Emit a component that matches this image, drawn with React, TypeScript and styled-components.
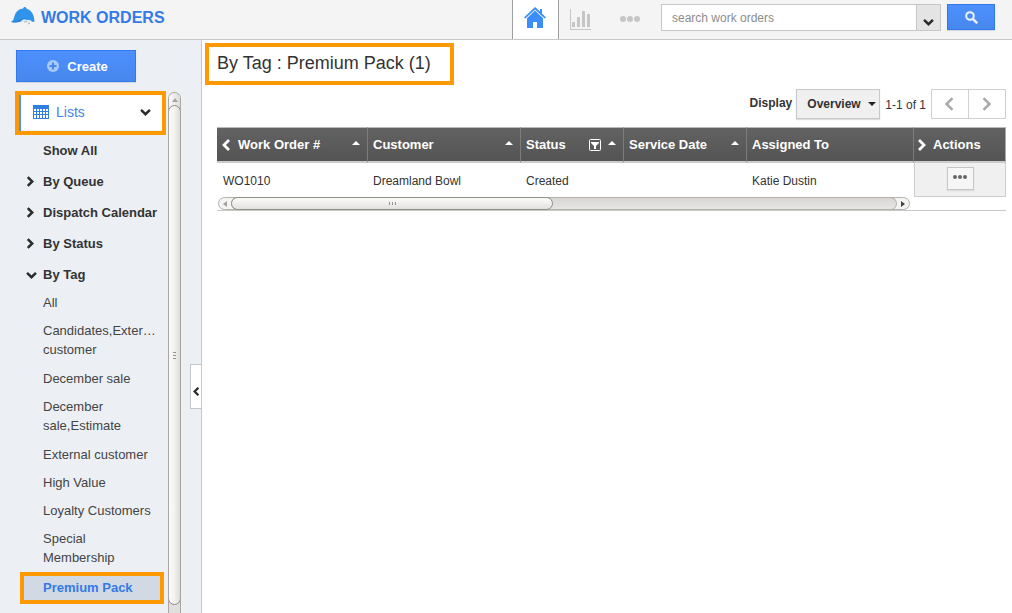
import React from "react";
import styled, { createGlobalStyle, css } from "styled-components";

const GlobalStyle = createGlobalStyle`
  * { box-sizing: border-box; }
  body {
    margin: 0;
    background: #fff;
    color: #333;
    font-family: "Liberation Sans", Arial, sans-serif;
    font-size: 12px;
  }
  button, input, select { font-family: inherit; margin: 0; }
  button { cursor: pointer; }
  ul { list-style: none; margin: 0; padding: 0; }
`;

const ORANGE = "#ff9900";

const Page = styled.div`
  display: flex;
  flex-direction: column;
  height: 100vh;
  overflow: hidden;
`;

/* ---------- top bar ---------- */

const TopBar = styled.header`
  display: flex;
  flex: none;
  height: 40px;
  background: #f4f4f4;
  border-bottom: 1px solid #c8c8c8;
`;

const Brand = styled.div`
  display: flex;
  align-items: flex-start;
  flex: 1;
  gap: 6px;
  padding: 7px 0 0 11px;
  color: #347ae6;
  font-size: 16px;
  font-weight: bold;
  line-height: 22px;
`;

const NavTabs = styled.nav`
  display: flex;
`;

const NavTab = styled.a<{ $active?: boolean; $width: number }>`
  display: flex;
  justify-content: center;
  width: ${(p) => p.$width}px;
  height: 39px;
  ${(p) =>
    p.$active &&
    css`
      padding-right: 1px;
      background: #fff;
      border-left: 1px solid #a0a0a0;
      border-right: 1px solid #a0a0a0;
    `}
`;

const NavIcon = styled.span<{ $top: number }>`
  display: flex;
  align-self: flex-start;
  padding-top: ${(p) => p.$top}px;
`;

const SearchForm = styled.form`
  display: flex;
  padding: 4px 17px 0 3px;
`;

const SearchBox = styled.input`
  width: 255px;
  height: 27px;
  padding: 0 10px;
  border: 1px solid #c6c6c6;
  border-right: 0;
  border-radius: 0;
  background: #fff;
  font-size: 12px;
  outline: none;
  &::placeholder { color: #8c8c8c; opacity: 1; }
`;

const SearchMenuButton = styled.button`
  display: flex;
  justify-content: center;
  width: 25px;
  height: 27px;
  padding: 13px 0 0;
  border: 1px solid #c6c6c6;
  background: #e4e4e4;
`;

const BlueButton = styled.button<{ $width: number; $height: number }>`
  display: flex;
  align-items: center;
  justify-content: center;
  gap: 8px;
  width: ${(p) => p.$width}px;
  height: ${(p) => p.$height}px;
  padding: 0;
  border: 1px solid #3079ed;
  background: linear-gradient(#4d90fe, #4787ed);
  box-shadow: 0 1px 1px #d5dae2;
  color: #fff;
  font-size: 13px;
  font-weight: bold;
`;

const CreateButton = styled(BlueButton)`
  padding-left: 3px;
`;

const SearchButton = styled(BlueButton)`
  margin-left: 6px;
`;

/* ---------- sidebar ---------- */

const Body = styled.div`
  display: flex;
  flex: 1;
  min-height: 0;
`;

const Sidebar = styled.aside`
  position: relative;
  display: flex;
  flex: none;
  flex-direction: column;
  width: 202px;
  padding-top: 10px;
  background: #ecf0f5;
  border-right: 1px solid #c4c8cd;
`;

const CreateRow = styled.div`
  flex: none;
  padding: 0 16px 9px;
`;

const ListArea = styled.div`
  display: flex;
  flex: 1;
  min-height: 0;
  padding: 0 20px 0 15px;
  overflow: hidden;
`;

const ListColumn = styled.div`
  flex: 1;
  min-width: 0;
  overflow: hidden;
`;

const ListsHeading = styled.button`
  display: flex;
  align-items: center;
  width: 151px;
  height: 44px;
  padding: 0 11px 2px 14px;
  border: 4px solid ${ORANGE};
  background: #fff;
  box-shadow: inset 2px 0 #4d90fe, inset 0 -1px #ecf0f5;
  color: #4585ea;
  font-size: 14px;
  text-align: left;
`;

const ListsLabel = styled.span`
  flex: 1;
  padding-left: 7px;
`;

const GroupRow = styled.a`
  display: flex;
  align-items: center;
  height: 31px;
  padding-left: 11px;
  color: #333;
  font-size: 13px;
  font-weight: bold;
  text-decoration: none;
  white-space: nowrap;
`;

const GroupMark = styled.span`
  display: flex;
  width: 17px;
`;

const TagList = styled.ul`
  && { margin-top: -2px; }
`;

const TagItem = styled.li<{ $wrapped?: boolean }>`
  padding: 5px 8px ${(p) => (p.$wrapped ? 5 : 4)}px 28px;
  font-size: 13px;
  line-height: 19px;
`;

const TagLink = styled.a`
  color: #444;
  text-decoration: none;
  white-space: pre-line;
`;

const CurrentTag = styled.a`
  display: block;
  width: 144px;
  margin: 0 0 9px 5px;
  padding: 2px 0 3px 19px;
  border: 4px solid ${ORANGE};
  background: #d1d9e4;
  color: #347ae6;
  font-size: 13px;
  font-weight: bold;
  line-height: 19px;
  text-decoration: none;
`;

const HelpDot = styled.span`
  display: block;
  width: 13px;
  height: 13px;
  margin-left: 98px;
  border-radius: 50%;
  background: #777;
`;

const VTrack = styled.div`
  flex: none;
  width: 13px;
  margin-top: 1px;
  border: 1px solid #aaa6a2;
  border-bottom: 0;
  border-radius: 7px 7px 0 0;
  background: #e0dfdd;
  overflow: hidden;
`;

const VArrow = styled.div`
  display: flex;
  justify-content: center;
  height: 18px;
  margin-bottom: -6px;
  padding-top: 5px;
  background: linear-gradient(90deg, #fafafa, #dedddc);
`;

const VThumb = styled.div`
  display: flex;
  align-items: center;
  justify-content: center;
  height: calc(100% - 20px);
  margin: 0 -1px;
  border: 1px solid #918d89;
  border-radius: 7px;
  background: linear-gradient(90deg, #fbfbfa, #f3f2f1 50%, #dcdbd9);
`;

const CollapseHandle = styled.button`
  position: absolute;
  right: -1px;
  top: 324px;
  display: flex;
  align-items: center;
  justify-content: center;
  width: 12px;
  height: 45px;
  padding: 9px 0 0;
  border: 1px solid #c4c8cd;
  background: #fff;
`;

/* ---------- main ---------- */

const Main = styled.main`
  display: flex;
  flex: 1;
  flex-direction: column;
  align-items: flex-start;
  min-width: 0;
  padding: 3px 6px 0 3px;
`;

const Title = styled.h1`
  margin: 0;
  padding: 6px 19px 8px 8px;
  border: 4px solid ${ORANGE};
  color: #333;
  font-size: 18px;
  font-weight: normal;
  line-height: 20px;
`;

const Toolbar = styled.div`
  display: flex;
  align-self: flex-end;
  align-items: center;
  margin: 4px 0 8px;
`;

const DisplayLabel = styled.label`
  padding: 0 4px 3px 0;
  font-weight: bold;
`;

const SelectWrap = styled.span`
  position: relative;
  display: flex;
`;

const ViewSelect = styled.select`
  width: 84px;
  height: 30px;
  padding: 0 0 0 10px;
  appearance: none;
  border: 1px solid #c8c8c8;
  border-radius: 0;
  background: #f0f0f0;
  box-shadow: 0 1px 1px #ddd;
  color: #333;
  font-size: 12px;
  font-weight: bold;
`;

const SelectCaret = styled.svg`
  position: absolute;
  right: 4px;
  top: 13px;
  pointer-events: none;
`;

const PageCount = styled.span`
  padding: 2px 5px 0 5px;
`;

const PagerButton = styled.button`
  display: flex;
  align-items: center;
  justify-content: center;
  width: 38px;
  height: 30px;
  padding: 0 2px 1px 0;
  border: 1px solid #d0d0d0;
  background: #fff;
  & + & { margin-left: -1px; }
`;

const TableArea = styled.section`
  align-self: stretch;
  margin-left: 12px;
  border-bottom: 1px solid #c8c8c8;
`;

const Table = styled.table`
  width: 100%;
  table-layout: fixed;
  border-collapse: separate;
  border-spacing: 0;
`;

const HeadCell = styled.th<{ $width?: number; $last?: boolean }>`
  width: ${(p) => (p.$width ? `${p.$width}px` : "auto")};
  height: 36px;
  padding: 0 7px 0 5px;
  border-top: 1px solid #bbb;
  border-right: 1px solid #7c7c7c;
  border-bottom: 2px solid #ccc;
  background: linear-gradient(#626262, #545454);
  color: #fff;
  font-size: 13px;
  text-align: left;
  ${(p) => p.$last && "padding-left: 3px; border-right-color: #aaa;"}
`;

const HeadContent = styled.div`
  display: flex;
  align-items: center;
  gap: 7px;
  white-space: nowrap;
`;

const HeadLabel = styled.span`
  flex: 1;
`;

const Cell = styled.td`
  height: 34px;
  padding: 1px 5px 0;
  &:first-child { padding-left: 6px; }
`;

const ActionCell = styled.td`
  padding: 0 0 2px;
  border: 1px solid #ccc;
  border-top: 0;
  background: #f0f0f0;
`;

const MoreButton = styled.button`
  display: flex;
  align-items: center;
  justify-content: center;
  width: 27px;
  height: 23px;
  margin: 0 auto;
  padding: 0 0 3px;
  border: 1px solid #c6c6c6;
  background: #f6f6f6;
  box-shadow: 0 1px 1px #ddd;
`;

const HTrack = styled.div`
  display: flex;
  height: 13px;
  margin: 0 96px 0 1px;
  border: 1px solid #b5b1ad;
  border-radius: 7px;
  background: #f4f4f3;
`;

const HArrow = styled.span`
  display: flex;
  align-items: center;
  justify-content: center;
  width: 12px;
`;

const HTrough = styled.div`
  display: flex;
  flex: 1;
  margin: -1px 0;
  border: 1px solid #b5b1ad;
  border-left: 0;
  border-radius: 7px;
  background: linear-gradient(#d8d6d4, #e6e5e4);
`;

const HThumb = styled.div`
  display: flex;
  align-items: center;
  justify-content: center;
  width: 322px;
  max-width: 50%;
  margin: -1px 0;
  border: 1px solid #918d89;
  border-radius: 7px;
  background: linear-gradient(#fbfbfa, #e2e1e0);
`;

/* ---------- icons ---------- */

type Dir = "left" | "right" | "down";

const chevrons: Record<Dir, string> = {
  left: "M7 1 L2 6 L7 11",
  right: "M2 1 L7 6 L2 11",
  down: "M1 2 L6 7 L11 2",
};

type ChevronProps = { dir: Dir; size?: number; color?: string; stroke?: number };

const Chevron = ({ dir, size = 11, color = "#2b2b2b", stroke = 2.8 }: ChevronProps) => {
  const down = dir === "down";
  const short = Math.round((size * 9) / 12);
  return (
    <svg
      width={down ? size : short}
      height={down ? short : size}
      viewBox={down ? "0 0 12 9" : "0 0 9 12"}
      fill="none"
      stroke={color}
      strokeWidth={stroke}
    >
      <path d={chevrons[dir]} />
    </svg>
  );
};

const CapIcon = () => (
  <svg width="24" height="19" viewBox="0 0 24 19">
    <path d="M0 15 Q3 13 3.5 9 Q5 2.5 12 1.5 L13 0 H14.5 L15.5 1.5 Q23 4 23.5 14.5 L22 15 Q15 11 9 14.5 Q4 16 0 15Z" fill="#3094ec" />
    <path d="M0 15 Q6 14 10 12 Q13 10.5 16 11 Q13 12.5 10 14.5 Q4 16 0 15Z" fill="#2b84d8" />
    <path d="M10 14 L13 12 L16 13.5 L20 13 L19 15.5 L17 17 L15 15 L12 15.5Z" fill="#e4ebf2" />
    <path d="M13 15 L16 14.5 M17 17 L19 16" stroke="#aab4c0" strokeWidth="1" />
  </svg>
);

const HomeIcon = () => (
  <svg width="22" height="21" viewBox="0 0 22 21">
    <path d="M11 0 L16 4.6 V2 H18 V6.6 L22 10.4 L20.6 11.4 L11 2.6 L1.4 11.4 L0 10.4Z" fill="#3b8efa" />
    <path d="M11 3.6 L19 11.2 V21 H13 V15 H9 V21 H3 V11.2Z" fill="#3b8efa" />
  </svg>
);

const ChartIcon = () => (
  <svg width="21" height="21" viewBox="0 0 21 21">
    <path d="M0 0H1V20H21V21H0Z" fill="#c6c6c6" />
    <path d="M2 13H5V18H2Z M7 8H10V18H7Z M12 2H15V18H12Z M17 5H20V18H17Z" fill="#c6c6c6" />
  </svg>
);

const Dots = ({ r, gap, color }: { r: number; gap: number; color: string }) => (
  <svg width={2 * (r + gap)} height={2 * r} fill={color}>
    <circle cx={r} cy={r} r={r} />
    <circle cx={r + gap} cy={r} r={r} />
    <circle cx={r + 2 * gap} cy={r} r={r} />
  </svg>
);

const SearchIcon = () => (
  <svg width="13" height="13" viewBox="0 0 13 13" fill="none" stroke="#eef4ff" strokeWidth="2">
    <circle cx="5" cy="5" r="3.8" />
    <path d="M7.8 7.8 L12.2 12.2" strokeWidth="2.4" />
  </svg>
);

const PlusIcon = () => (
  <svg width="12" height="12" viewBox="0 0 12 12">
    <circle cx="6" cy="6" r="6" fill="#a9c9fb" />
    <path d="M6 2.5V9.5M2.5 6H9.5" stroke="#4787ed" strokeWidth="2" />
  </svg>
);

const GridIcon = () => (
  <svg width="16" height="14" viewBox="0 0 16 14">
    <path d="M0 0H16V14H0Z" fill="#2f7fe0" />
    <path
      d="M1 4h2v2h-2z M4 4h2v2h-2z M7 4h2v2h-2z M10 4h2v2h-2z M13 4h2v2h-2z M1 7h2v2h-2z M4 7h2v2h-2z M7 7h2v2h-2z M10 7h2v2h-2z M13 7h2v2h-2z M1 10h2v3h-2z M4 10h2v3h-2z M7 10h2v3h-2z M10 10h2v3h-2z M13 10h2v3h-2z"
      fill="#fff"
    />
  </svg>
);

const FilterIcon = () => (
  <svg width="12" height="12" viewBox="0 0 12 12">
    <rect x="0.5" y="0.5" width="11" height="11" rx="1" fill="none" stroke="#fff" />
    <path d="M2 3H10V4L7 7V10H5V7L2 4Z" fill="#fff" />
  </svg>
);

const SortIcon = () => (
  <svg width="8" height="8" viewBox="0 0 8 8">
    <path d="M4 0L8 4H0Z" fill="#fff" />
  </svg>
);

const Grip = ({ vertical }: { vertical?: boolean }) => (
  <svg width="7" height="7" viewBox="0 0 7 7">
    <path
      d={vertical ? "M2 0.5H5 M2 3.5H5 M2 6.5H5" : "M0.5 2V5 M3.5 2V5 M6.5 2V5"}
      stroke="#96928e"
    />
  </svg>
);

/* ---------- data ---------- */

const groups: { label: string; dir?: Dir }[] = [
  { label: "Show All" },
  { label: "By Queue", dir: "right" },
  { label: "Dispatch Calendar", dir: "right" },
  { label: "By Status", dir: "right" },
  { label: "By Tag", dir: "down" },
];

const tags = [
  "All",
  "Candidates,Exter…\ncustomer",
  "December sale",
  "December\nsale,Estimate",
  "External customer",
  "High Value",
  "Loyalty Customers",
  "Special\nMembership",
];

export default function App() {
  return (
    <Page>
      <GlobalStyle />
      <TopBar>
        <Brand>
          <CapIcon />
          WORK ORDERS
        </Brand>
        <NavTabs>
          <NavTab href="#home" aria-label="Home" $active $width={47}>
            <NavIcon $top={7}><HomeIcon /></NavIcon>
          </NavTab>
          <NavTab href="#reports" aria-label="Reports" $width={43}>
            <NavIcon $top={9}><ChartIcon /></NavIcon>
          </NavTab>
          <NavTab href="#more" aria-label="More" $width={56}>
            <NavIcon $top={16}><Dots r={3} gap={7} color="#c6c6c6" /></NavIcon>
          </NavTab>
        </NavTabs>
        <SearchForm onSubmit={(e) => e.preventDefault()}>
          <SearchBox type="text" aria-label="Search work orders" placeholder="search work orders" />
          <SearchMenuButton type="button" aria-label="Search options">
            <Chevron dir="down" />
          </SearchMenuButton>
          <SearchButton type="submit" aria-label="Search" $width={48} $height={26}>
            <SearchIcon />
          </SearchButton>
        </SearchForm>
      </TopBar>
      <Body>
        <Sidebar>
          <CreateRow>
            <CreateButton type="button" $width={120} $height={32}>
              <PlusIcon />
              Create
            </CreateButton>
          </CreateRow>
          <ListArea>
            <ListColumn>
              <ListsHeading type="button">
                <GridIcon />
                <ListsLabel>Lists</ListsLabel>
                <Chevron dir="down" />
              </ListsHeading>
              <nav>
                {groups.map((g) => (
                  <GroupRow href="#list" key={g.label}>
                    <GroupMark>{g.dir && <Chevron dir={g.dir} />}</GroupMark>
                    {g.label}
                  </GroupRow>
                ))}
                <TagList>
                  {tags.map((t) => (
                    <TagItem key={t} $wrapped={t.includes("\n")}>
                      <TagLink href="#tag">{t}</TagLink>
                    </TagItem>
                  ))}
                  <li>
                    <CurrentTag href="#premium" aria-current="page">Premium Pack</CurrentTag>
                  </li>
                </TagList>
              </nav>
              <HelpDot />
            </ListColumn>
            <VTrack>
              <VArrow>
                <svg width="6" height="4"><path d="M3 0L6 4H0Z" fill="#a5a19d" /></svg>
              </VArrow>
              <VThumb><Grip vertical /></VThumb>
            </VTrack>
          </ListArea>
          <CollapseHandle type="button" aria-label="Collapse sidebar">
            <Chevron dir="left" size={9} stroke={3} />
          </CollapseHandle>
        </Sidebar>
        <Main>
          <Title>By Tag : Premium Pack (1)</Title>
          <Toolbar>
            <DisplayLabel htmlFor="display">Display</DisplayLabel>
            <SelectWrap>
              <ViewSelect id="display" defaultValue="Overview">
                <option>Overview</option>
              </ViewSelect>
              <SelectCaret width="8" height="4"><path d="M0 0H8L4 4Z" fill="#222" /></SelectCaret>
            </SelectWrap>
            <PageCount>1-1 of 1</PageCount>
            <PagerButton type="button" aria-label="Previous page">
              <Chevron dir="left" size={14} color="#aaa" stroke={2.2} />
            </PagerButton>
            <PagerButton type="button" aria-label="Next page">
              <Chevron dir="right" size={14} color="#aaa" stroke={2.2} />
            </PagerButton>
          </Toolbar>
          <TableArea>
            <Table>
              <thead>
                <tr>
                  <HeadCell $width={151}>
                    <HeadContent>
                      <Chevron dir="left" size={12} color="#fff" />
                      <HeadLabel>Work Order #</HeadLabel>
                      <SortIcon />
                    </HeadContent>
                  </HeadCell>
                  <HeadCell $width={153}>
                    <HeadContent><HeadLabel>Customer</HeadLabel><SortIcon /></HeadContent>
                  </HeadCell>
                  <HeadCell $width={103}>
                    <HeadContent>
                      <HeadLabel>Status</HeadLabel>
                      <FilterIcon />
                      <SortIcon />
                    </HeadContent>
                  </HeadCell>
                  <HeadCell $width={123}>
                    <HeadContent><HeadLabel>Service Date</HeadLabel><SortIcon /></HeadContent>
                  </HeadCell>
                  <HeadCell>
                    <HeadContent><HeadLabel>Assigned To</HeadLabel></HeadContent>
                  </HeadCell>
                  <HeadCell $width={92} $last>
                    <HeadContent>
                      <Chevron dir="right" size={12} color="#fff" />
                      <HeadLabel>Actions</HeadLabel>
                    </HeadContent>
                  </HeadCell>
                </tr>
              </thead>
              <tbody>
                <tr>
                  <Cell>WO1010</Cell>
                  <Cell>Dreamland Bowl</Cell>
                  <Cell>Created</Cell>
                  <Cell />
                  <Cell>Katie Dustin</Cell>
                  <ActionCell>
                    <MoreButton type="button" aria-label="More actions">
                      <Dots r={2} gap={5} color="#666" />
                    </MoreButton>
                  </ActionCell>
                </tr>
              </tbody>
            </Table>
            <HTrack>
              <HArrow><svg width="4" height="6"><path d="M4 0V6L0 3Z" fill="#a5a19d" /></svg></HArrow>
              <HTrough>
                <HThumb><Grip /></HThumb>
              </HTrough>
              <HArrow><svg width="4" height="6"><path d="M0 0V6L4 3Z" fill="#444" /></svg></HArrow>
            </HTrack>
          </TableArea>
        </Main>
      </Body>
    </Page>
  );
}
